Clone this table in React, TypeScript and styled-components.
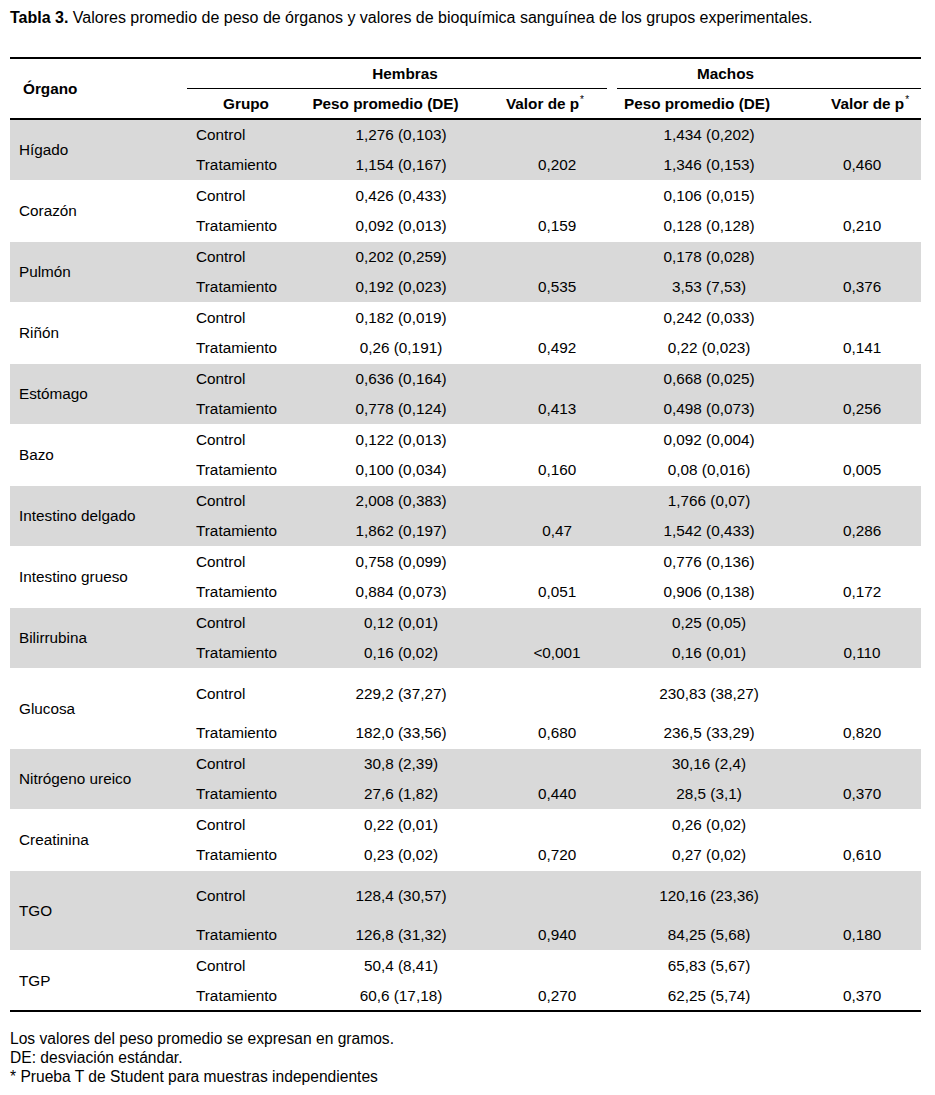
import React from "react";
import styled, { createGlobalStyle } from "styled-components";

const GlobalStyle = createGlobalStyle`
  html, body { margin: 0; padding: 0; background: #ffffff; }
  body { font-family: "Liberation Sans", Arial, sans-serif; color: #000; }
`;

const Page = styled.div`
  width: 935px;
  padding: 8px 0 0 10px;
  box-sizing: border-box;
  font-size: 15.3px;
`;

const Caption = styled.p`
  margin: 0 0 30px 0;
  font-size: 16px;
  line-height: 19px;
  white-space: nowrap;
  b { font-weight: 700; }
`;

const Table = styled.table`
  width: 911px;
  table-layout: fixed;
  border-collapse: separate;
  border-spacing: 0;
  border-top: 2px solid #000;
  border-bottom: 2px solid #000;
`;

const HeadRow = styled.tr``;

const HeadCell = styled.th<{ $pl?: number; $align?: string; $bottom?: boolean }>`
  font-weight: 700;
  padding: 0 0 0 ${(p) => p.$pl ?? 0}px;
  text-align: ${(p) => p.$align ?? "center"};
  height: 29px;
  vertical-align: middle;
  border-bottom: ${(p) => (p.$bottom ? "2px solid #000" : "none")};
  white-space: nowrap;
`;

const GroupHead = styled.th`
  padding: 0;
  height: 30px;
  vertical-align: top;
`;

const GroupLabel = styled.div<{ $side: "left" | "right"; $pl?: number; $pr?: number }>`
  height: 29px;
  border-bottom: 1px solid #000;
  margin-${(p) => (p.$side === "left" ? "right" : "left")}: 5px;
  display: flex;
  align-items: center;
  justify-content: center;
  padding-left: ${(p) => p.$pl ?? 0}px;
  padding-right: ${(p) => p.$pr ?? 0}px;
  font-weight: 700;
`;

const Sup = styled.sup`
  font-size: 10px;
  vertical-align: top;
  position: relative;
  top: -1px;
  font-weight: 400;
  margin-left: 1px;
`;

const BodyRow = styled.tr<{ $shade: boolean }>`
  background: ${(p) => (p.$shade ? "#d9d9d9" : "#ffffff")};
`;

const OrganCell = styled.td<{ $sep: boolean }>`
  padding: 0 0 0 9px;
  vertical-align: middle;
  text-align: left;
  border-bottom: ${(p) => (p.$sep ? "1px solid #fff" : "none")};
  white-space: nowrap;
`;

const Cell = styled.td<{ $h: number; $pl?: number; $align?: string; $sep: boolean; $tall?: boolean }>`
  height: ${(p) => p.$h}px;
  padding: 0 0 ${(p) => (p.$tall ? 15 : 0)}px ${(p) => p.$pl ?? 0}px;
  text-align: ${(p) => p.$align ?? "center"};
  vertical-align: ${(p) => (p.$tall ? "bottom" : "middle")};
  border-bottom: ${(p) => (p.$sep ? "1px solid #fff" : "none")};
  white-space: nowrap;
  line-height: 18px;
  box-sizing: border-box;
`;

const Notes = styled.div`
  margin-top: 17px;
  font-size: 15.6px;
  line-height: 19px;
`;

const Note = styled.div``;

type Group = {
  organ: string;
  c: [string, string];
  t: [string, string];
  pH: string;
  pM: string;
  tall?: boolean;
};

const groups: Group[] = [
  { organ: "Hígado", c: ["1,276 (0,103)", "1,434 (0,202)"], t: ["1,154 (0,167)", "1,346 (0,153)"], pH: "0,202", pM: "0,460" },
  { organ: "Corazón", c: ["0,426 (0,433)", "0,106 (0,015)"], t: ["0,092 (0,013)", "0,128 (0,128)"], pH: "0,159", pM: "0,210" },
  { organ: "Pulmón", c: ["0,202 (0,259)", "0,178 (0,028)"], t: ["0,192 (0,023)", "3,53 (7,53)"], pH: "0,535", pM: "0,376" },
  { organ: "Riñón", c: ["0,182 (0,019)", "0,242 (0,033)"], t: ["0,26 (0,191)", "0,22 (0,023)"], pH: "0,492", pM: "0,141" },
  { organ: "Estómago", c: ["0,636 (0,164)", "0,668 (0,025)"], t: ["0,778 (0,124)", "0,498 (0,073)"], pH: "0,413", pM: "0,256" },
  { organ: "Bazo", c: ["0,122 (0,013)", "0,092 (0,004)"], t: ["0,100 (0,034)", "0,08 (0,016)"], pH: "0,160", pM: "0,005" },
  { organ: "Intestino delgado", c: ["2,008 (0,383)", "1,766 (0,07)"], t: ["1,862 (0,197)", "1,542 (0,433)"], pH: "0,47", pM: "0,286" },
  { organ: "Intestino grueso", c: ["0,758 (0,099)", "0,776 (0,136)"], t: ["0,884 (0,073)", "0,906 (0,138)"], pH: "0,051", pM: "0,172" },
  { organ: "Bilirrubina", c: ["0,12 (0,01)", "0,25 (0,05)"], t: ["0,16 (0,02)", "0,16 (0,01)"], pH: "<0,001", pM: "0,110" },
  { organ: "Glucosa", c: ["229,2 (37,27)", "230,83 (38,27)"], t: ["182,0 (33,56)", "236,5 (33,29)"], pH: "0,680", pM: "0,820", tall: true },
  { organ: "Nitrógeno ureico", c: ["30,8 (2,39)", "30,16 (2,4)"], t: ["27,6 (1,82)", "28,5 (3,1)"], pH: "0,440", pM: "0,370" },
  { organ: "Creatinina", c: ["0,22 (0,01)", "0,26 (0,02)"], t: ["0,23 (0,02)", "0,27 (0,02)"], pH: "0,720", pM: "0,610" },
  { organ: "TGO", c: ["128,4 (30,57)", "120,16 (23,36)"], t: ["126,8 (31,32)", "84,25 (5,68)"], pH: "0,940", pM: "0,180", tall: true },
  { organ: "TGP", c: ["50,4 (8,41)", "65,83 (5,67)"], t: ["60,6 (17,18)", "62,25 (5,74)"], pH: "0,270", pM: "0,370" },
];

const COL = { grupo: 9, pesoH: 31, pH: 36, pesoM: 24, pM: 21 };

function GroupRows({ g, index, last }: { g: Group; index: number; last: boolean }) {
  const shade = index % 2 === 0;
  const sep = !last;
  const ch = g.tall ? 49 : 30;
  const th = sep ? 31 : 29;
  return (
    <>
      <BodyRow $shade={shade}>
        <OrganCell rowSpan={2} $sep={sep}>{g.organ}</OrganCell>
        <Cell $h={ch} $pl={COL.grupo} $align="left" $sep={false} $tall={g.tall}>Control</Cell>
        <Cell $h={ch} $pl={COL.pesoH} $sep={false} $tall={g.tall}>{g.c[0]}</Cell>
        <Cell $h={ch} $sep={false} />
        <Cell $h={ch} $pl={COL.pesoM} $sep={false} $tall={g.tall}>{g.c[1]}</Cell>
        <Cell $h={ch} $sep={false} />
      </BodyRow>
      <BodyRow $shade={shade}>
        <Cell $h={th} $pl={COL.grupo} $align="left" $sep={sep}>Tratamiento</Cell>
        <Cell $h={th} $pl={COL.pesoH} $sep={sep}>{g.t[0]}</Cell>
        <Cell $h={th} $pl={COL.pH} $sep={sep}>{g.pH}</Cell>
        <Cell $h={th} $pl={COL.pesoM} $sep={sep}>{g.t[1]}</Cell>
        <Cell $h={th} $pl={COL.pM} $sep={sep}>{g.pM}</Cell>
      </BodyRow>
    </>
  );
}

export default function App() {
  return (
    <Page>
      <GlobalStyle />
      <Caption>
        <b>Tabla 3.</b> Valores promedio de peso de órganos y valores de bioquímica sanguínea de los grupos experimentales.
      </Caption>
      <Table>
        <colgroup>
          <col style={{ width: 177 }} />
          <col style={{ width: 118 }} />
          <col style={{ width: 161 }} />
          <col style={{ width: 146 }} />
          <col style={{ width: 170 }} />
          <col style={{ width: 139 }} />
        </colgroup>
        <thead>
          <HeadRow>
            <HeadCell rowSpan={2} $align="left" $pl={13} $bottom>Órgano</HeadCell>
            <GroupHead colSpan={3}>
              <GroupLabel $side="left" $pl={16}>Hembras</GroupLabel>
            </GroupHead>
            <GroupHead colSpan={2}>
              <GroupLabel $side="right" $pr={87}>Machos</GroupLabel>
            </GroupHead>
          </HeadRow>
          <HeadRow>
            <HeadCell $bottom>Grupo</HeadCell>
            <HeadCell $bottom>Peso promedio (DE)</HeadCell>
            <HeadCell $bottom $pl={12}>Valor de p<Sup>*</Sup></HeadCell>
            <HeadCell $bottom>Peso promedio (DE)</HeadCell>
            <HeadCell $bottom $pl={37}>Valor de p<Sup>*</Sup></HeadCell>
          </HeadRow>
        </thead>
        <tbody>
          {groups.map((g, i) => (
            <GroupRows key={g.organ} g={g} index={i} last={i === groups.length - 1} />
          ))}
        </tbody>
      </Table>
      <Notes>
        <Note>Los valores del peso promedio se expresan en gramos.</Note>
        <Note>DE: desviación estándar.</Note>
        <Note>* Prueba T de Student para muestras independientes</Note>
      </Notes>
    </Page>
  );
}
